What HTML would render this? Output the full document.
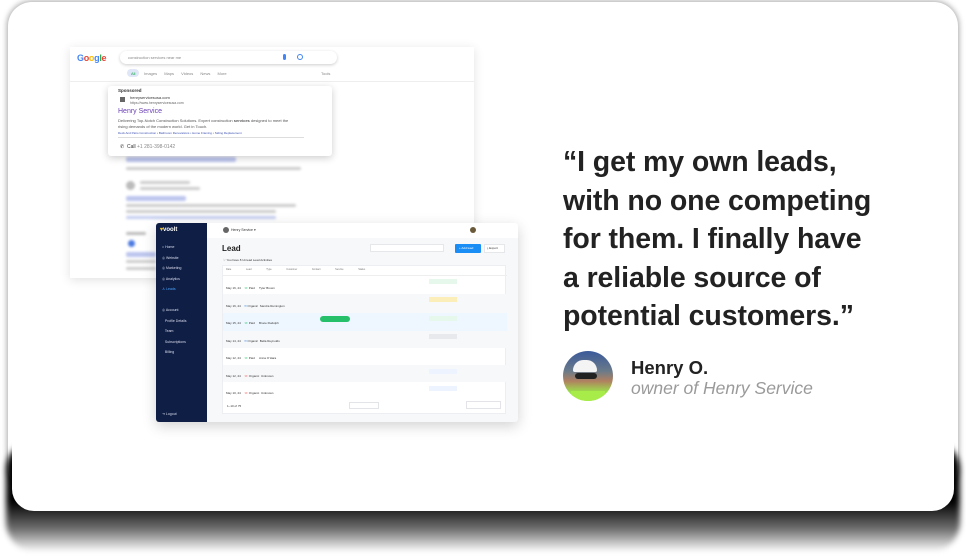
<!DOCTYPE html>
<html><head><meta charset="utf-8"><style>
*{box-sizing:border-box;margin:0;padding:0}
body{width:966px;height:556px;background:#fff;position:relative;overflow:hidden;font-family:"Liberation Sans",sans-serif}
.sh{position:absolute;left:6px;top:440px;width:954px;height:112px;border-radius:30px;background:linear-gradient(#000 0%,#000 55%,rgba(0,0,0,.55) 80%,rgba(0,0,0,0) 100%);filter:blur(3px)}
.shs{position:absolute;left:8px;top:2px;width:950px;height:490px;border-radius:24px;box-shadow:0 0 6px 1px rgba(0,0,0,.35)}
.card{position:absolute;left:12px;top:2px;width:942px;height:509px;background:#fff;border-radius:22px}
.ab{position:absolute}
.bl{background:#e4e7ee;border-radius:2px;position:absolute;height:3px}
.q{position:absolute;left:563px;top:143px;font-size:28.5px;font-weight:bold;line-height:38.5px;color:#222;letter-spacing:-.1px;white-space:nowrap}
.t{font-size:4px;color:#333;position:absolute;white-space:nowrap}
</style></head><body>
<div class="shs"></div>
<div class="sh"></div>
<div class="card"></div>

<div class="ab" style="left:70px;top:47px;width:404px;height:231px;background:#fff;box-shadow:0 2px 10px rgba(0,0,0,.12)">
  <div class="ab" style="left:7px;top:6px;font-size:9px;font-weight:bold;letter-spacing:-.3px"><span style="color:#4285f4">G</span><span style="color:#ea4335">o</span><span style="color:#fbbc05">o</span><span style="color:#4285f4">g</span><span style="color:#34a853">l</span><span style="color:#ea4335">e</span></div>
  <div class="ab" style="left:50px;top:4px;width:217px;height:13px;border-radius:7px;box-shadow:0 1px 3px rgba(0,0,0,.2);background:#fff"></div>
  <div class="t" style="left:58px;top:8px;color:#888">construction services near me</div>
  <div class="ab" style="left:213px;top:7px;width:3px;height:6px;background:#4285f4;border-radius:2px"></div>
  <div class="ab" style="left:227px;top:7px;width:6px;height:6px;border:1px solid #4285f4;border-radius:50%"></div>
  <div class="ab" style="left:57px;top:22px;width:12px;height:8px;border-radius:4px;background:#dfe6f7"></div>
  <div class="t" style="left:61px;top:24px;color:#1a4">All</div>
  <div class="t" style="left:74px;top:24px;color:#888;word-spacing:6px">Images Maps Videos News More</div>
  <div class="t" style="left:251px;top:24px;color:#888">Tools</div>
  <div class="ab" style="left:0;top:34px;width:404px;height:1px;background:#eee"></div>
  <div style="filter:blur(1.3px)">
  <div class="bl" style="left:56px;top:110px;width:110px;height:5px;background:#bcc5ee"></div>
  <div class="bl" style="left:56px;top:120px;width:175px;background:#ccc"></div>
  <div class="ab" style="left:56px;top:134px;width:9px;height:9px;border-radius:50%;background:#bbb"></div>
  <div class="bl" style="left:70px;top:134px;width:50px;background:#ccc"></div>
  <div class="bl" style="left:70px;top:140px;width:60px;background:#ccc"></div>
  <div class="bl" style="left:56px;top:149px;width:60px;height:5px;background:#bcc5ee"></div>
  <div class="bl" style="left:56px;top:157px;width:170px;background:#ccc"></div>
  <div class="bl" style="left:56px;top:163px;width:150px;background:#ccc"></div>
  <div class="bl" style="left:56px;top:169px;width:150px;background:#c4cdf0"></div>
  <div class="bl" style="left:56px;top:185px;width:20px;background:#bbb"></div>
  <div class="ab" style="left:58px;top:193px;width:7px;height:7px;border-radius:50%;background:#4a78e0"></div>
  <div class="bl" style="left:56px;top:205px;width:30px;height:5px;background:#bcc5ee"></div>
  <div class="bl" style="left:56px;top:213px;width:30px;background:#ccc"></div>
  <div class="bl" style="left:56px;top:220px;width:30px;background:#ccc"></div>
  </div>
</div>
<div class="ab" style="left:108px;top:86px;width:224px;height:70px;background:#fff;box-shadow:0 2px 8px rgba(0,0,0,.2);border-radius:3px">
  <div class="t" style="left:10px;top:2px;font-weight:bold;font-size:4.5px">Sponsored</div>
  <div class="ab" style="left:12px;top:11px;width:5px;height:5px;background:#666"></div>
  <div class="t" style="left:22px;top:9px">henryservicesusa.com</div>
  <div class="t" style="left:22px;top:15px;color:#666;font-size:3.5px">https://www.henryservicesusa.com</div>
  <div class="t" style="left:10px;top:22px;font-size:7px;color:#6a3fb3">Henry Service</div>
  <div class="t" style="left:10px;top:32px;color:#555">Delivering Top-Notch Construction Solutions. Expert construction <b>services</b> designed to meet the</div>
  <div class="t" style="left:10px;top:38px;color:#555">rising demands of the modern world. Get in Touch.</div>
  <div class="t" style="left:10px;top:45px;color:#3a4fb0;font-size:3px">Deck And Patio Construction • Bathroom Renovations • Home Framing • Siding Replacement</div>
  <div class="ab" style="left:10px;top:51px;width:186px;height:1px;background:#ddd"></div>
  <div class="t" style="left:12px;top:58px;font-size:5px">✆ &nbsp;Call <span style="color:#888">+1 281-398-0142</span></div>
</div>

<div class="ab" style="left:156px;top:223px;width:362px;height:199px;background:#f7f8fa;box-shadow:0 4px 14px rgba(0,0,0,.18);border-radius:3px;overflow:hidden">
  <div class="ab" style="left:0;top:0;width:51px;height:199px;background:#0e1e45"></div>
  <div class="t" style="left:4px;top:3px;color:#fff;font-size:6px;font-weight:bold"><span style="color:#e8c23a">▾</span>voolt</div>
  <div class="t" style="left:6px;top:19px;color:#dde;font-size:3.5px;line-height:10.5px">⌂ Home<br>◎ Website<br>◎ Marketing<br>◎ Analytics<br><span style="color:#4aa3ff">♙ Leads</span><br><br>◎ Account<br>&nbsp;&nbsp;&nbsp;Profile Details<br>&nbsp;&nbsp;&nbsp;Team<br>&nbsp;&nbsp;&nbsp;Subscriptions<br>&nbsp;&nbsp;&nbsp;Billing</div>
  <div class="t" style="left:6px;top:189px;color:#dde;font-size:3.5px">⇥ Logout</div>
  <div class="ab" style="left:51px;top:0;width:311px;height:15px;background:#fff"></div>
  <div class="ab" style="left:67px;top:4px;width:6px;height:6px;border-radius:50%;background:#666"></div>
  <div class="t" style="left:75px;top:5px;font-size:3.5px">Henry Service ▾</div>
  <div class="ab" style="left:314px;top:4px;width:6px;height:6px;border-radius:50%;background:#6a5a3a"></div>
  <div class="t" style="left:66px;top:21px;font-size:8px;font-weight:bold;color:#222">Lead</div>
  <div class="ab" style="left:214px;top:21px;width:74px;height:8px;background:#fff;border:1px solid #e5e7eb"></div>
  <div class="ab" style="left:299px;top:21px;width:26px;height:9px;background:#1a8ef5;border-radius:1px"></div>
  <div class="t" style="left:303px;top:23px;color:#fff;font-size:3px">+ Add lead</div>
  <div class="ab" style="left:328px;top:21px;width:21px;height:9px;background:#fff;border:1px solid #e5e7eb"></div>
  <div class="t" style="left:331px;top:23px;font-size:3px">⤓ Export</div>
  <div class="t" style="left:67px;top:35px;font-size:3px">♡ You have 8 Unread Lead Activities</div>
  <div class="ab" style="left:66px;top:42px;width:284px;height:149px;background:#fff;border:1px solid #eceef2">
    <div class="ab" style="left:0;top:9px;width:284px;height:1px;background:#eee"></div>
    <div class="ab" style="left:0;top:28px;width:284px;height:19px;background:#f7f8fa"></div>
    <div class="ab" style="left:0;top:47px;width:284px;height:18px;background:#eef6ff"></div>
    <div class="ab" style="left:0;top:65px;width:284px;height:17px;background:#f7f8fa"></div>
    <div class="ab" style="left:0;top:99px;width:284px;height:17px;background:#f7f8fa"></div>
    <div class="ab" style="left:206px;top:13px;width:28px;height:5px;background:#e6f7ec"></div>
    <div class="ab" style="left:206px;top:31px;width:28px;height:5px;background:#fbeeb8"></div>
    <div class="ab" style="left:206px;top:50px;width:28px;height:5px;background:#e6f7ec"></div>
    <div class="ab" style="left:206px;top:68px;width:28px;height:5px;background:#e8e9ec"></div>
    <div class="ab" style="left:206px;top:103px;width:28px;height:5px;background:#eef4ff"></div>
    <div class="ab" style="left:206px;top:120px;width:28px;height:5px;background:#eef4ff"></div>
    <div class="ab" style="left:97px;top:50px;width:30px;height:6px;background:#27c06a;border-radius:3px"></div>
    <div class="t" style="left:3px;top:2px;font-size:2.5px;color:#777;word-spacing:14px">Date Lead&nbsp;Type Customer Contact Service Status</div>
    <div class="t" style="left:3px;top:14px;font-size:3px;color:#333;line-height:17.5px">May 16, 24 &nbsp;&nbsp;&nbsp;<span style="color:#27c06a">☏</span> Paid &nbsp;&nbsp;&nbsp;&nbsp;Tyler Brown<br>May 16, 24 &nbsp;&nbsp;&nbsp;<span style="color:#4a90e2">✉</span> Organic &nbsp;Sandra Remington<br>May 15, 24 &nbsp;&nbsp;&nbsp;<span style="color:#27c06a">☏</span> Paid &nbsp;&nbsp;&nbsp;&nbsp;Bruce Rudolph<br>May 14, 24 &nbsp;&nbsp;&nbsp;<span style="color:#4a90e2">✉</span> Organic &nbsp;Bella Reynolds<br>May 12, 24 &nbsp;&nbsp;&nbsp;<span style="color:#27c06a">☏</span> Paid &nbsp;&nbsp;&nbsp;&nbsp;Anna O'Hara<br>May 12, 24 &nbsp;&nbsp;&nbsp;<span style="color:#e55">☏</span> Organic &nbsp;Unknown<br>May 10, 24 &nbsp;&nbsp;&nbsp;<span style="color:#e55">☏</span> Organic &nbsp;Unknown</div>
    <div class="t" style="left:4px;top:138px;font-size:3px">1–10 of 75</div>
    <div class="ab" style="left:126px;top:136px;width:30px;height:7px;border:1px solid #e2e4e8"></div>
    <div class="ab" style="left:243px;top:135px;width:35px;height:8px;border:1px solid #e2e4e8"></div>
  </div>
</div>

<div class="q">“I get my own leads,<br>with no one competing<br>for them. I finally have<br>a reliable source of<br>potential customers.”</div>

<div class="ab" style="left:563px;top:351px;width:50px;height:50px;border-radius:50%;overflow:hidden;background:linear-gradient(#3a5a9a 0%,#6a7a8a 40%,#b08060 60%,#9be04a 82%)">
  <div class="ab" style="left:10px;top:9px;width:24px;height:12px;border-radius:12px 12px 2px 2px;background:#f4f4f4"></div>
  <div class="ab" style="left:12px;top:22px;width:22px;height:6px;border-radius:3px;background:#222"></div>
  <div class="ab" style="left:8px;top:40px;width:34px;height:12px;background:#a8ec4a"></div>
</div>
<div class="ab" style="left:631px;top:357px;font-size:18.5px;font-weight:bold;color:#222">Henry O.</div>
<div class="ab" style="left:631px;top:378px;font-size:17.5px;font-style:italic;color:#9a9a9a">owner of Henry Service</div>
</body></html>
